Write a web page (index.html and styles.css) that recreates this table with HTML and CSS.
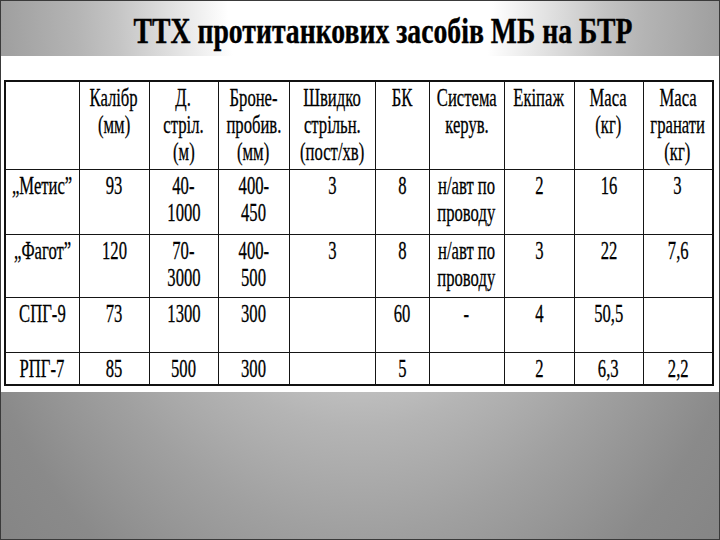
FILE: index.html
```html
<!DOCTYPE html>
<html lang="uk">
<head>
<meta charset="utf-8">
<title>ТТХ протитанкових засобів МБ на БТР</title>
<link rel="stylesheet" href="styles.css">
</head>
<body>
<div class="slide">
  <header class="head">
    <h1 class="title">ТТХ протитанкових засобів МБ на БТР</h1>
  </header>
  <section class="sheet">
    <table class="ttx">
      <colgroup>
        <col class="w74"><col class="w70"><col class="w69"><col class="w71"><col class="w86">
        <col class="w54"><col class="w75"><col class="w70"><col class="w69"><col class="w70">
      </colgroup>
      <tr class="r0">
        <td></td>
        <td><div class="c"><span>Калібр</span><span>(мм)</span></div></td>
        <td><div class="c"><span>Д.</span><span>стріл.</span><span>(м)</span></div></td>
        <td><div class="c"><span>Броне-</span><span>пробив.</span><span>(мм)</span></div></td>
        <td><div class="c"><span>Швидко</span><span>стрільн.</span><span>(пост/хв)</span></div></td>
        <td><div class="c"><span>БК</span></div></td>
        <td><div class="c"><span>Система</span><span>керув.</span></div></td>
        <td><div class="c"><span>Екіпаж</span></div></td>
        <td><div class="c"><span>Маса</span><span>(кг)</span></div></td>
        <td><div class="c"><span>Маса</span><span>гранати</span><span>(кг)</span></div></td>
      </tr>
      <tr class="r1">
        <td><div class="c"><span>„Метис”</span></div></td>
        <td><div class="c"><span>93</span></div></td>
        <td><div class="c"><span>40-</span><span>1000</span></div></td>
        <td><div class="c"><span>400-</span><span>450</span></div></td>
        <td><div class="c"><span>3</span></div></td>
        <td><div class="c"><span>8</span></div></td>
        <td><div class="c"><span>н/авт по</span><span>проводу</span></div></td>
        <td><div class="c"><span>2</span></div></td>
        <td><div class="c"><span>16</span></div></td>
        <td><div class="c"><span>3</span></div></td>
      </tr>
      <tr class="r2">
        <td><div class="c"><span>„Фагот”</span></div></td>
        <td><div class="c"><span>120</span></div></td>
        <td><div class="c"><span>70-</span><span>3000</span></div></td>
        <td><div class="c"><span>400-</span><span>500</span></div></td>
        <td><div class="c"><span>3</span></div></td>
        <td><div class="c"><span>8</span></div></td>
        <td><div class="c"><span>н/авт по</span><span>проводу</span></div></td>
        <td><div class="c"><span>3</span></div></td>
        <td><div class="c"><span>22</span></div></td>
        <td><div class="c"><span>7,6</span></div></td>
      </tr>
      <tr class="r3">
        <td><div class="c"><span>СПГ-9</span></div></td>
        <td><div class="c"><span>73</span></div></td>
        <td><div class="c"><span>1300</span></div></td>
        <td><div class="c"><span>300</span></div></td>
        <td></td>
        <td><div class="c"><span>60</span></div></td>
        <td><div class="c"><span>-</span></div></td>
        <td><div class="c"><span>4</span></div></td>
        <td><div class="c"><span>50,5</span></div></td>
        <td></td>
      </tr>
      <tr class="r4">
        <td><div class="c"><span>РПГ-7</span></div></td>
        <td><div class="c"><span>85</span></div></td>
        <td><div class="c"><span>500</span></div></td>
        <td><div class="c"><span>300</span></div></td>
        <td></td>
        <td><div class="c"><span>5</span></div></td>
        <td></td>
        <td><div class="c"><span>2</span></div></td>
        <td><div class="c"><span>6,3</span></div></td>
        <td><div class="c"><span>2,2</span></div></td>
      </tr>
    </table>
  </section>
</div>
</body>
</html>
```
FILE: styles.css
```css
html, body {
  margin: 0;
  padding: 0;
}
body {
  width: 720px;
  height: 540px;
  overflow: hidden;
}
.slide {
  box-sizing: border-box;
  width: 720px;
  height: 540px;
  border: 1px solid #3a3a3a;
  background: radial-gradient(ellipse farthest-corner at 50% 0%,
    #ffffff 0%, #ffffff 26%, #c4c4c4 48%, #b4b4b4 56%, #a0a0a0 70%, #8a8a8a 88%, #858585 100%);
  display: flex;
  flex-direction: column;
  font-family: "Liberation Serif", "Times New Roman", serif;
  color: #000;
}
.head {
  height: 55px;
  display: flex;
  justify-content: center;
  padding-left: 45px;
  box-sizing: border-box;
}
.title {
  margin: 0;
  padding-top: 10px;
  font-size: 36px;
  line-height: 40px;
  font-weight: bold;
  white-space: nowrap;
  transform: scaleX(0.77);
  transform-origin: center;
  -webkit-text-stroke: 0.4px #000;
}
.sheet {
  background: #fff;
  height: 336px;
  box-sizing: border-box;
  padding: 24px 6px 0 3px;
}
.ttx {
  border-collapse: collapse;
  table-layout: fixed;
  width: 709px;
  border: 2px solid #111;
}
.w74 { width: 74px; }
.w70 { width: 70px; }
.w69 { width: 69px; }
.w71 { width: 71px; }
.w86 { width: 86px; }
.w54 { width: 54px; }
.w75 { width: 75px; }
.ttx td {
  border: 1.6px solid #151515;
  vertical-align: top;
  padding: 2px 0 0 0;
  font-size: 26px;
  line-height: 27px;
}
.r0 { height: 88px; }
.r1 { height: 65px; }
.r2 { height: 63px; }
.r3 { height: 55px; }
.r4 { height: 33px; }
.c {
  display: flex;
  flex-direction: column;
  align-items: center;
}
.c span {
  display: block;
  white-space: nowrap;
  transform: scaleX(0.64);
  transform-origin: center;
  -webkit-text-stroke: 0.3px #000;
}
```
